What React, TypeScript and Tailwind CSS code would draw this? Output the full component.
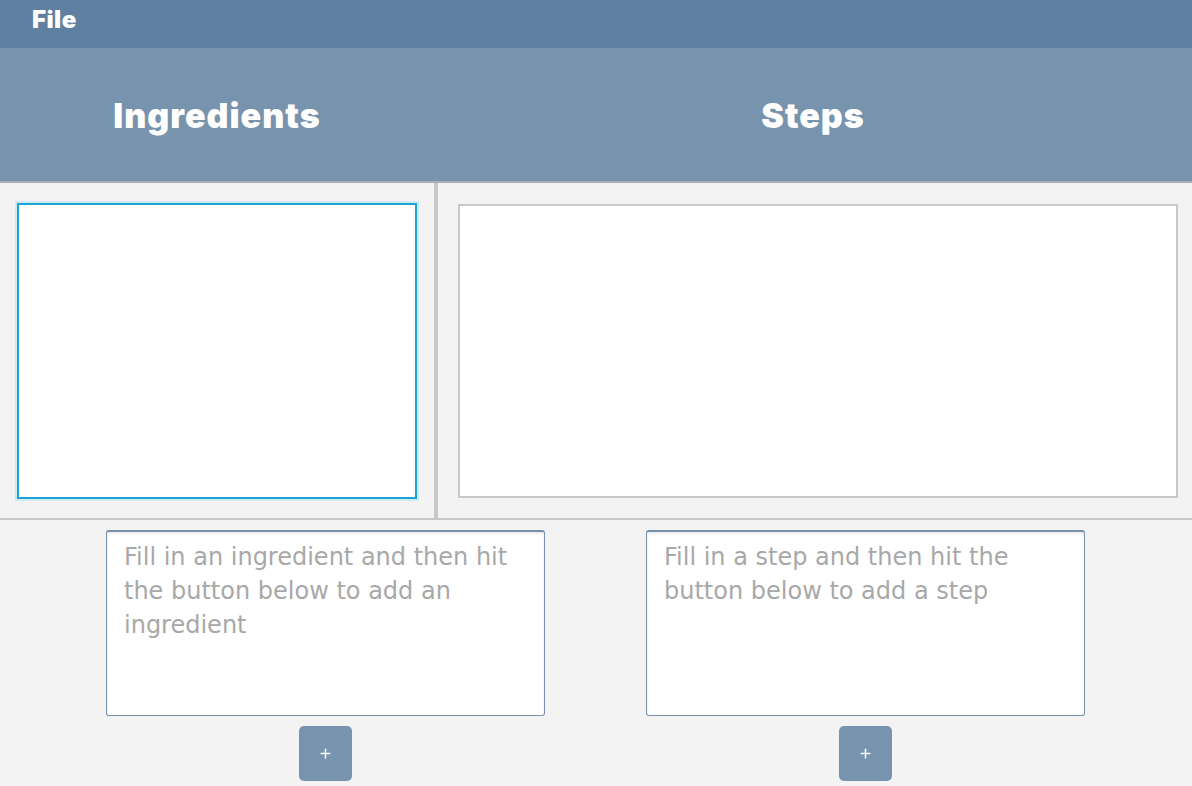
import { Plus } from 'lucide-react';

export default function App() {
  return (
    <div className="w-[1192px] h-[786px] flex flex-col bg-[#f3f3f3] overflow-hidden" style={{ fontFamily: 'Inter, "Liberation Sans", sans-serif' }}>
      {/* Menu bar */}
      <div className="h-[48px] shrink-0 bg-[#5f80a0] flex items-start px-[32px] pt-[2px]">
        <span className="text-white text-[24px] font-black tracking-[0.5px]">File</span>
      </div>

      {/* Column headers */}
      <div className="h-[135px] shrink-0 bg-[#7893ad] border-b-2 border-[#a9afb6] flex pt-[1px]">
        <div className="w-[434px] flex items-center justify-center">
          <h1 className="text-white text-[34px] font-black tracking-[1px]">Ingredients</h1>
        </div>
        <div className="flex-1 flex items-center justify-center">
          <h1 className="text-white text-[34px] font-black tracking-[1px]">Steps</h1>
        </div>
      </div>

      {/* Lists */}
      <div className="h-[337px] shrink-0 flex border-b-2 border-[#c8c8c8]">
        <div className="w-[434px] px-[17px] pt-[20px] pb-[19px]">
          <div className="h-full bg-white border-2 border-[#1ba4d8] shadow-[0_0_0_2px_#cfe9f3]" />
        </div>
        <div className="w-[4px] bg-[#c8c8c8]" />
        <div className="flex-1 pl-[20px] pr-[14px] pt-[21px] pb-[20px]">
          <div className="h-full bg-white border-2 border-[#c8c8c8]" />
        </div>
      </div>

      {/* Inputs */}
      <div className="flex pl-[106px] gap-[101px] pt-[10px]">
        <InputCol placeholder="Fill in an ingredient and then hit the button below to add an ingredient" />
        <InputCol placeholder="Fill in a step and then hit the button below to add a step" />
      </div>
    </div>
  );
}

function InputCol({ placeholder }: { placeholder: string }) {
  return (
    <div className="w-[439px] flex flex-col items-center">
      <textarea
        placeholder={placeholder}
        className="w-[439px] h-[186px] resize-none bg-white border border-[#7690aa] border-t-2 rounded-[3px] px-[17px] pt-[8px] text-[24px] leading-[34px] text-[#444] placeholder:text-[#a8a8a8] outline-none shadow-[inset_0_2px_3px_rgba(0,0,0,0.08)]"
        style={{ fontFamily: '"DejaVu Sans", "Liberation Sans", sans-serif' }}
      />
      <button className="mt-[10px] w-[53px] h-[55px] rounded-[5px] bg-[#7893ad] flex items-center justify-center text-white">
        <Plus size={15} strokeWidth={2.4} />
      </button>
    </div>
  );
}
